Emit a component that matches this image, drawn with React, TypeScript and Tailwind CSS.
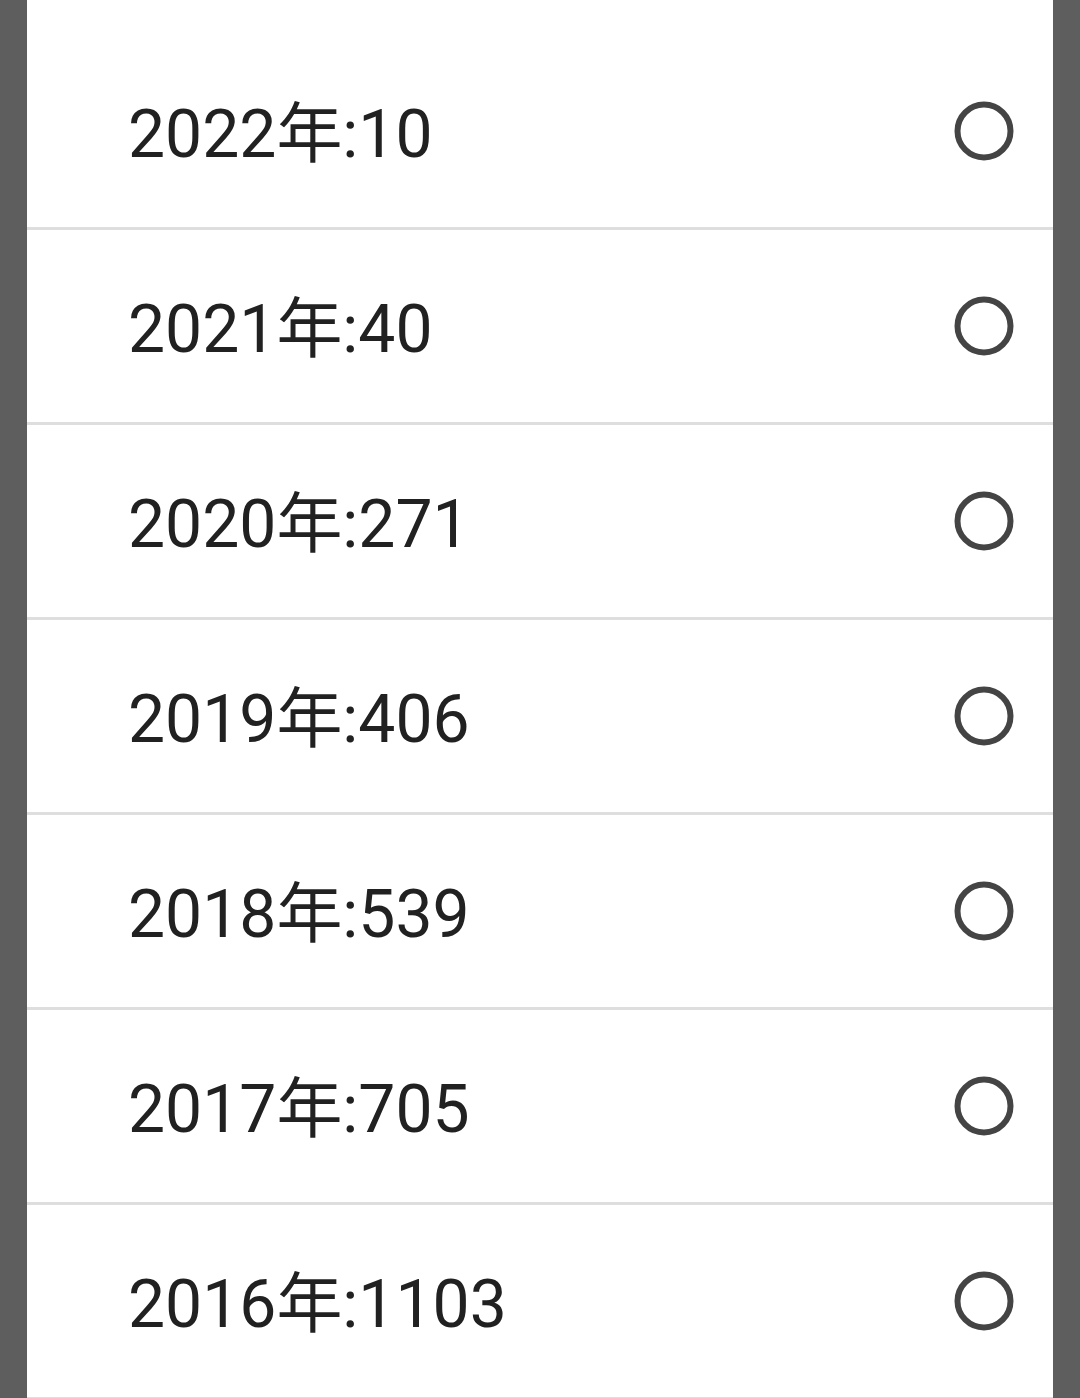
const years = [
  { year: 2022, count: 10 },
  { year: 2021, count: 40 },
  { year: 2020, count: 271 },
  { year: 2019, count: 406 },
  { year: 2018, count: 539 },
  { year: 2017, count: 705 },
  { year: 2016, count: 1103 },
];

function Radio() {
  return (
    <svg width="62" height="62" viewBox="0 0 62 62" className="shrink-0">
      <circle cx="31" cy="31" r="26.5" fill="none" stroke="#444444" strokeWidth="6" />
    </svg>
  );
}

export default function App() {
  return (
    <div className="w-[1080px] h-[1398px] overflow-hidden bg-[#5e5e5e] flex justify-center">
      <div className="w-[1026px] h-full bg-white pt-[35px] flex flex-col">
        {years.map((y) => (
          <div
            key={y.year}
            className="h-[195px] shrink-0 flex items-center justify-between pl-[101px] pr-[38px] border-b-[3px] border-[#dedede]"
          >
            <span className="text-[66px] leading-none text-[#212121] font-['Roboto','Noto_Sans_CJK_SC',sans-serif] pt-[8px]">
              {y.year}年:{y.count}
            </span>
            <Radio />
          </div>
        ))}
      </div>
    </div>
  );
}
